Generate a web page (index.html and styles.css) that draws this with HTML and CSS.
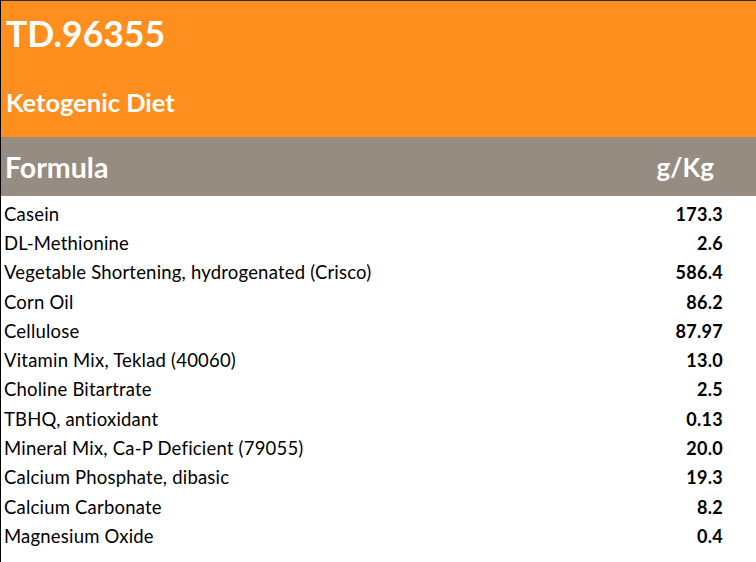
FILE: index.html
```html
<!DOCTYPE html>
<html>
<head>
<meta charset="utf-8">
<link rel="stylesheet" href="styles.css">
</head>
<body>
<div class="sheet">
  <header class="banner">
    <div class="code">TD.96355</div>
    <div class="name">Ketogenic Diet</div>
  </header>
  <div class="colhead">
    <span class="ch-label">Formula</span>
    <span class="ch-unit">g/Kg</span>
  </div>
  <div class="rows">
    <div class="row"><span class="ing">Casein</span><span class="amt">173.3</span></div>
    <div class="row"><span class="ing">DL-Methionine</span><span class="amt">2.6</span></div>
    <div class="row"><span class="ing">Vegetable Shortening, hydrogenated (Crisco)</span><span class="amt">586.4</span></div>
    <div class="row"><span class="ing">Corn Oil</span><span class="amt">86.2</span></div>
    <div class="row"><span class="ing">Cellulose</span><span class="amt">87.97</span></div>
    <div class="row"><span class="ing">Vitamin Mix, Teklad (40060)</span><span class="amt">13.0</span></div>
    <div class="row"><span class="ing">Choline Bitartrate</span><span class="amt">2.5</span></div>
    <div class="row"><span class="ing">TBHQ, antioxidant</span><span class="amt">0.13</span></div>
    <div class="row"><span class="ing">Mineral Mix, Ca-P Deficient (79055)</span><span class="amt">20.0</span></div>
    <div class="row"><span class="ing">Calcium Phosphate, dibasic</span><span class="amt">19.3</span></div>
    <div class="row"><span class="ing">Calcium Carbonate</span><span class="amt">8.2</span></div>
    <div class="row"><span class="ing">Magnesium Oxide</span><span class="amt">0.4</span></div>
  </div>
</div>
</body>
</html>
```
FILE: styles.css
```css
html, body {
  margin: 0;
  padding: 0;
  background: #ffffff;
}
body {
  font-family: Lato, "Liberation Sans", sans-serif;
  color: #000;
}
.sheet {
  width: 755px;
  height: 561px;
  border-top: 1px solid #2a2a2a;
  border-left: 1px solid #000;
  overflow: hidden;
}
.banner {
  background: #fe8f1e;
  height: 136px;
  color: #fff;
  font-weight: 700;
  padding-left: 5px;
  box-sizing: border-box;
}
.code {
  font-size: 35.5px;
  line-height: 36px;
  padding-top: 15px;
}
.name {
  font-size: 25.5px;
  line-height: 25px;
  padding-top: 38px;
}
.colhead {
  background: #978c81;
  height: 59px;
  color: #fff;
  font-weight: 700;
  font-size: 28.5px;
  display: flex;
  align-items: center;
  justify-content: space-between;
  padding: 0 42px 0 4px;
}
.ch-unit {
  font-size: 26px;
}
.rows {
  padding-top: 3px;
}
.row {
  height: 29.3px;
  display: flex;
  align-items: center;
  justify-content: space-between;
  padding: 0 33px 0 3px;
  font-size: 18.5px;
}
.ing {
  letter-spacing: 0.2px;
}
.amt {
  font-weight: 700;
  font-size: 18px;
  letter-spacing: 0.3px;
}
```
